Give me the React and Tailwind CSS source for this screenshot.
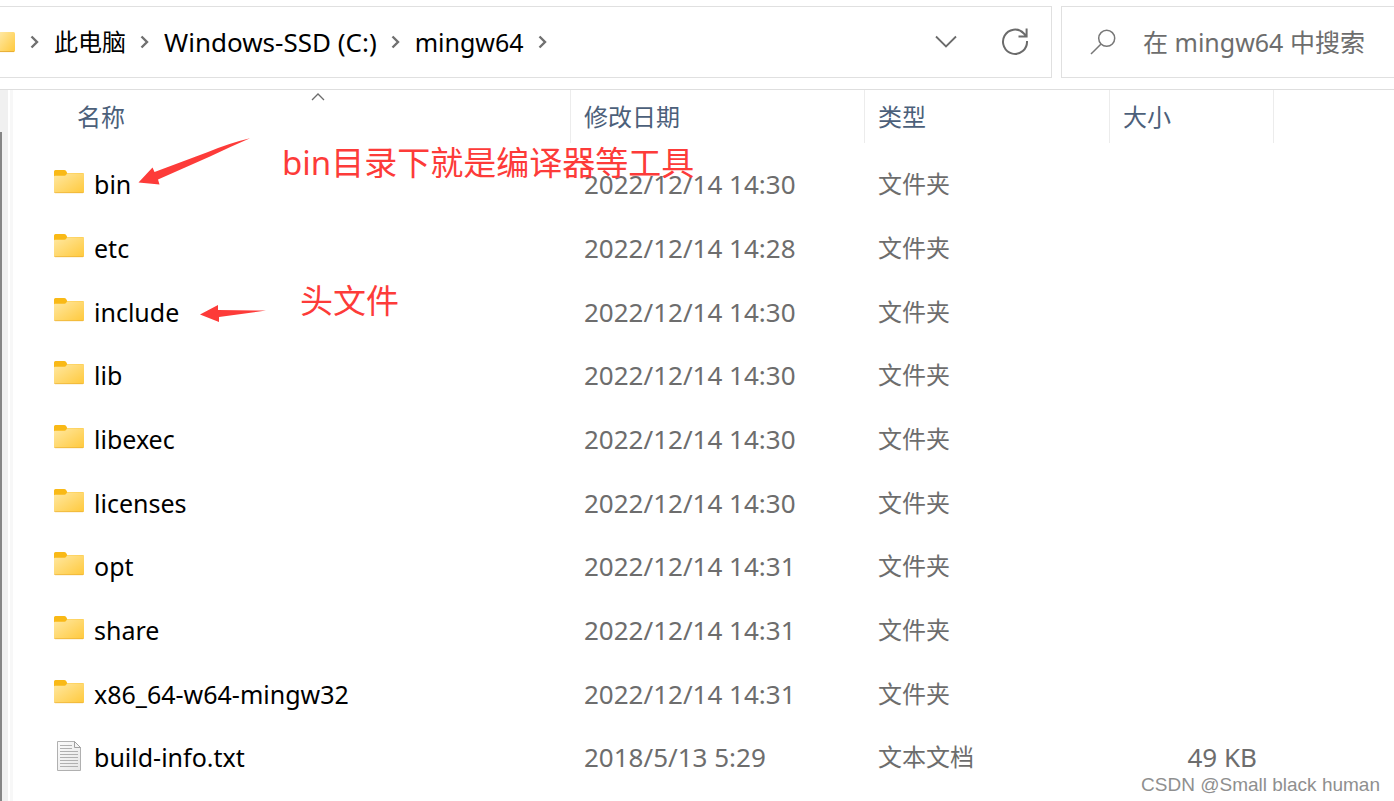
import React from 'react';

const rows = [
  ['bin', '2022/12/14 14:30'],
  ['etc', '2022/12/14 14:28'],
  ['include', '2022/12/14 14:30'],
  ['lib', '2022/12/14 14:30'],
  ['libexec', '2022/12/14 14:30'],
  ['licenses', '2022/12/14 14:30'],
  ['opt', '2022/12/14 14:31'],
  ['share', '2022/12/14 14:31'],
  ['x86_64-w64-mingw32', '2022/12/14 14:31'],
  ['build-info.txt', '2018/5/13 5:29', '文本文档', '49 KB'],
];

function Gradients() {
  return (
    <svg width="0" height="0" className="absolute" aria-hidden="true">
      <defs>
        <linearGradient id="folderFront" x1="0" y1="0" x2="1" y2="1">
          <stop offset="0" stopColor="#ffe8a2" />
          <stop offset="1" stopColor="#ffc93c" />
        </linearGradient>
        <linearGradient id="page" x1="0" y1="0" x2="1" y2="1">
          <stop offset="0" stopColor="#fbfbfb" />
          <stop offset="1" stopColor="#e6e6e6" />
        </linearGradient>
      </defs>
    </svg>
  );
}

function Folder() {
  return (
    <svg width="30" height="32" viewBox="0 0 30 32" className="shrink-0" aria-hidden="true">
      <path d="M0 3.5Q0 2 1.5 2H10Q11.6 2 12.3 3.2L13.2 5H28.5Q30 5 30 6.5V12H0Z" fill="#f9b916" />
      <path d="M0 8.5Q0 7.8 1 7.8H10.5Q11.5 7.8 12 7L13.2 5.3H29Q30 5.3 30 6.3V23.5Q30 25 28.5 25H1.5Q0 25 0 23.5Z" fill="url(#folderFront)" />
      <path d="M.3 24.2Q.6 24.7 1.5 24.7H28.5Q29.4 24.7 29.7 24.2" fill="none" stroke="#e9ad31" strokeWidth=".7" />
    </svg>
  );
}

function TextFile() {
  return (
    <svg width="30" height="32" viewBox="0 0 30 32" className="shrink-0" aria-hidden="true">
      <path d="M3.5 .5H20.5L26.5 6.5V29.5H3.5Z" fill="url(#page)" stroke="#b0b0b0" />
      <path d="M20.5 .5V6.5H26.5Z" fill="#f4f4f4" stroke="#a0a0a0" />
      <path d="M6 4.5H18M6 7.5H18M6 10.5H24M6 13.5H24M6 16.5H24M6 19.5H24M6 22.5H24M6 25.5H24" stroke="#b0b0b0" />
    </svg>
  );
}

function Crumb() {
  return (
    <svg width="10" height="14" viewBox="0 0 10 14" fill="none" stroke="#707070" strokeWidth="2.4" className="shrink-0" aria-hidden="true">
      <path d="M1.5 1.5L7 7L1.5 12.5" />
    </svg>
  );
}

export default function App() {
  return (
    <div className="relative flex min-h-screen flex-col overflow-hidden bg-white font-['Noto_Sans','Noto_Sans_CJK_SC',sans-serif] text-[26px] leading-8 text-black">
      <Gradients />
      <header className="flex h-[89px] shrink-0 gap-[9px] pt-[6px] pb-[11px]">
        <nav aria-label="路径" className="flex min-w-0 flex-1 items-center border border-l-0 border-[#e0e0e0] whitespace-nowrap">
          <svg width="15" height="22" viewBox="0 0 15 22" className="shrink-0" aria-hidden="true">
            <path d="M0 1H13.5Q15 1 15 2.5V19.5Q15 21 13.5 21H0Z" fill="url(#folderFront)" />
            <path d="M0 20.6H14" stroke="#dfa32c" strokeWidth=".8" />
          </svg>
          <ol className="ml-[15px] flex items-center gap-[14px] text-[25px]">
            <li className="flex items-center gap-[14px]"><Crumb /><a href="#pc" className="text-2xl">此电脑</a></li>
            <li className="flex items-center gap-[14px]"><Crumb /><a href="#c" className="text-[26px]">Windows-SSD (C:)</a></li>
            <li className="flex items-center gap-[14px]"><Crumb /><a href="#mingw64">mingw64</a></li>
            <li><Crumb /></li>
          </ol>
          <button aria-label="以前的位置" className="ml-auto flex h-9 w-9 items-center justify-center">
            <svg width="22" height="14" viewBox="0 0 22 14" fill="none" stroke="#6b6b6b" strokeWidth="1.8"><path d="M1 1.5L11 11.5L21 1.5" /></svg>
          </button>
          <button aria-label="刷新" className="mr-[18px] ml-[33px] flex h-9 w-9 items-center justify-center">
            <svg width="28" height="28" viewBox="0 0 28 28" fill="none" stroke="#6b6b6b" strokeWidth="2">
              <path d="M26 13A12 12.2 0 1 1 22.6 5.2L25.6 8.4M25.6 .5V8.4H17.5" />
            </svg>
          </button>
        </nav>
        <label className="flex w-[333px] shrink-0 items-center border border-r-0 border-[#e0e0e0] pl-[28px]">
          <svg width="26" height="26" viewBox="0 0 26 26" fill="none" stroke="#777" strokeWidth="1.5" className="shrink-0" aria-hidden="true">
            <circle cx="16.7" cy="9.3" r="8" /><path d="M10.8 15.2L1 25" />
          </svg>
          <input type="search" aria-label="搜索" placeholder="在 mingw64 中搜索" className="ml-[27px] w-0 flex-1 bg-transparent text-[25px] outline-none placeholder:text-[#6d6d6d] placeholder:opacity-100" />
        </label>
      </header>

      <div className="flex flex-1 border-t border-[#dedede]">
        <div className="w-2 shrink-0 bg-[#f0f0f0] pt-[42px]"><div className="h-full w-[2px] bg-[#858585]" /></div>
        <div className="ml-[2px] w-[3px] shrink-0 bg-[#f7f7f7]" />
        <main className="relative min-w-0 flex-1">
          <table className="w-full table-fixed border-collapse text-left">
            <colgroup>
              <col className="w-[558px]" />
              <col className="w-[294px]" />
              <col className="w-[245px]" />
              <col className="w-[164px]" />
              <col />
            </colgroup>
            <thead className="text-2xl text-[#4c607a]">
              <tr className="h-[62px] align-top">
                <th className="relative p-0 font-normal">
                  <div className="flex h-[53px] items-center border-r border-[#ececec] pl-16">名称</div>
                  <svg width="14" height="8" viewBox="0 0 14 8" fill="none" stroke="#6b6b6b" strokeWidth="1.3" className="absolute top-[3px] left-[298px]" aria-label="升序"><path d="M1 7L7 1L13 7" /></svg>
                </th>
                <th className="p-0 font-normal"><div className="flex h-[53px] items-center border-r border-[#ececec] pl-[13px]">修改日期</div></th>
                <th className="p-0 font-normal"><div className="flex h-[53px] items-center border-r border-[#ececec] pl-[13px]">类型</div></th>
                <th className="p-0 font-normal"><div className="flex h-[53px] items-center border-r border-[#ececec] pl-[13px]">大小</div></th>
                <td />
              </tr>
            </thead>
            <tbody className="text-[#6d6d6d]">
              {rows.map(([name, date, type, size]) => (
                <tr key={name} className="h-16 nth-[3n]:h-[63px]">
                  <td className="p-0 pl-[41px] text-[25px] text-black"><div className="flex items-center gap-[10px]">{size ? <TextFile /> : <Folder />}<span>{name}</span></div></td>
                  <td className="p-0 pl-[13px]">{date}</td>
                  <td className="p-0 pl-[13px] text-2xl">{type || '文件夹'}</td>
                  <td className="p-0 pr-[17px] text-right">{size}</td>
                  <td />
                </tr>
              ))}
            </tbody>
          </table>

          <svg width="112" height="48" viewBox="0 0 112 48" className="absolute top-[48px] left-[125px]" fill="#fd3b39" aria-hidden="true">
            <path d="M.5 44.5L14.5 29.5L16.5 34L70 14Q92 5 112 .3Q92 9 72 18.5L20 41.5L21.5 46.5Z" />
          </svg>
          <svg width="66" height="18" viewBox="0 0 66 18" className="absolute top-[215px] left-[187px]" fill="#fd3b39" aria-hidden="true">
            <path d="M0 9.5L18 0V5L66 5.5L19 12L19 17Z" />
          </svg>
          <p className="absolute top-[49px] left-[269px] text-[33px] leading-[48px] whitespace-nowrap text-[#fd3b39]">bin目录下就是编译器等工具</p>
          <p className="absolute top-[187px] left-[287px] text-[33px] leading-[48px] whitespace-nowrap text-[#fd3b39]">头文件</p>
        </main>
      </div>
      <p className="absolute right-[14px] bottom-[4px] font-['Liberation_Sans',sans-serif] text-[19px] leading-6 text-[#8f8f8f]">CSDN @Small black human</p>
    </div>
  );
}
